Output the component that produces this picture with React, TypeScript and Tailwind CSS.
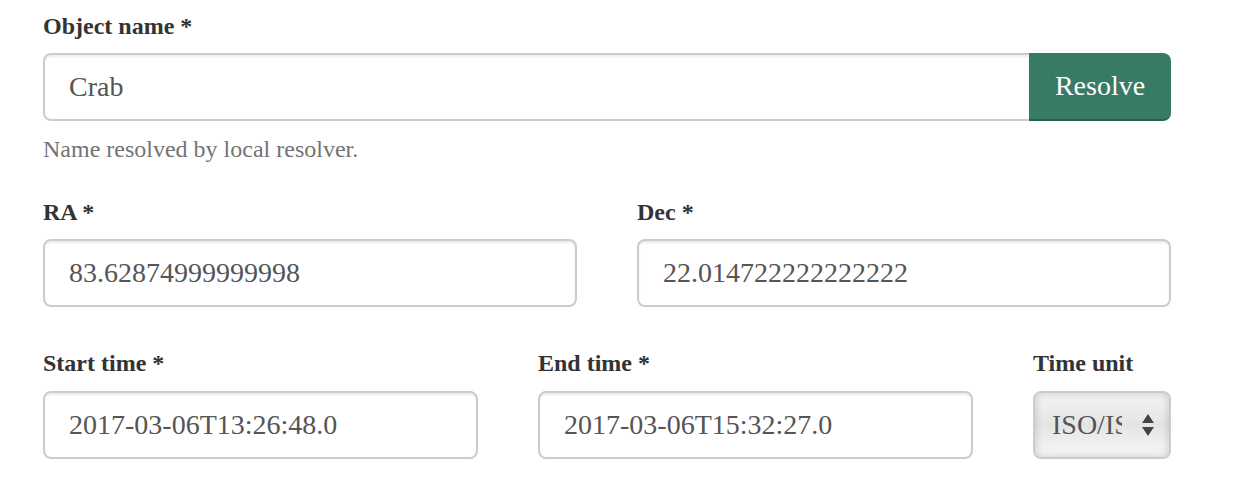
import React from "react";

const labelCls = "block h-[32px] leading-[32px] text-[24px] font-bold text-[#333333]";
const inputCls =
  "flex items-center h-[68px] border-2 border-[#cccccc] rounded-[8px] bg-white pl-[24px] text-[28px] text-[#555555] shadow-[inset_0_2px_2px_rgba(0,0,0,0.075)]";

export default function App() {
  return (
    <div className="w-[1234px] h-[488px] bg-white overflow-hidden font-['Liberation_Serif','Times_New_Roman',serif]">
      <div className="w-[1128px] ml-[43px] pt-[10px]">
        <label className={labelCls}>Object name *</label>
        <div className="flex mt-[11px] h-[68px]">
          <div className="flex-1 flex items-center border-2 border-r-0 border-[#cccccc] rounded-l-[8px] pl-[24px] text-[28px] text-[#555555] shadow-[inset_0_2px_2px_rgba(0,0,0,0.075)]">
            Crab
          </div>
          <button className="w-[142px] h-[68px] bg-[#377b67] border-b-2 border-[#2b604f] rounded-r-[8px] text-white text-[28px] leading-none flex items-center justify-center font-['Liberation_Serif','Times_New_Roman',serif]">
            Resolve
          </button>
        </div>
        <p className="mt-[12px] h-[32px] leading-[32px] text-[24px] text-[#737373]">Name resolved by local resolver.</p>

        <div className="grid grid-cols-2 gap-x-[60px] mt-[31px]">
          <div>
            <label className={labelCls}>RA *</label>
            <div className={inputCls + " mt-[11px]"}>83.62874999999998</div>
          </div>
          <div>
            <label className={labelCls}>Dec *</label>
            <div className={inputCls + " mt-[11px]"}>22.014722222222222</div>
          </div>
        </div>

        <div className="grid grid-cols-[435px_435px_138px] gap-x-[60px] mt-[40px]">
          <div>
            <label className={labelCls}>Start time *</label>
            <div className={inputCls + " mt-[12px]"}>2017-03-06T13:26:48.0</div>
          </div>
          <div>
            <label className={labelCls}>End time *</label>
            <div className={inputCls + " mt-[12px]"}>2017-03-06T15:32:27.0</div>
          </div>
          <div>
            <label className={labelCls}>Time unit</label>
            <div className="mt-[12px] h-[68px] flex items-center border-2 border-[#cccccc] rounded-[8px] bg-gradient-to-b from-[#f4f4f4] via-[#e4e4e4] to-[#f8f8f8] shadow-[inset_0_0_8px_rgba(0,0,0,0.18)] pl-[17px] pr-[14px] text-[28px] text-[#555555]">
              <span className="w-[70px] overflow-hidden whitespace-nowrap">ISO/ISOT</span>
              <svg className="ml-auto" width="14" height="24" viewBox="0 0 14 24">
                <path d="M7 1 L13 10 L1 10 Z" fill="#444" />
                <path d="M1 14 L13 14 L7 23 Z" fill="#444" />
              </svg>
            </div>
          </div>
        </div>
      </div>
    </div>
  );
}
